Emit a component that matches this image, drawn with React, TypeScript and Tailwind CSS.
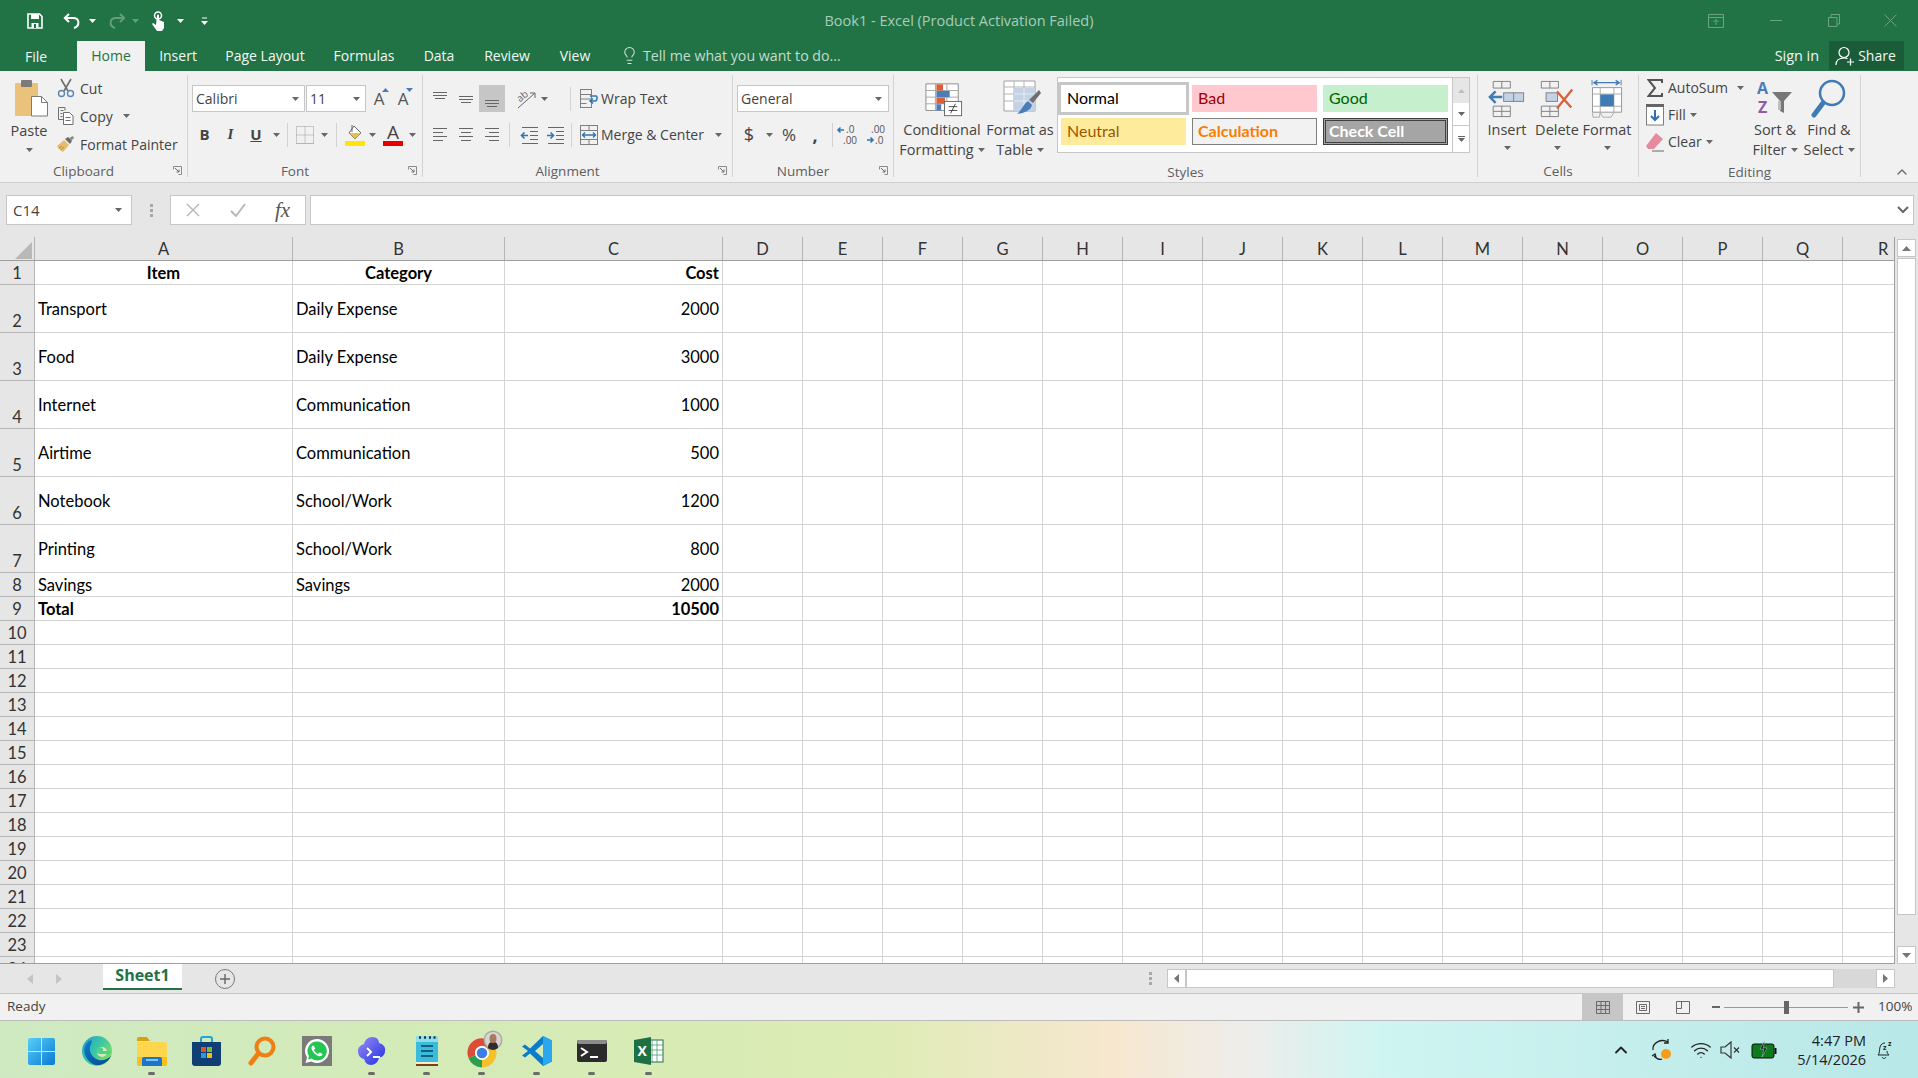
import React from 'react';
import { ChevronUp, Lightbulb, Wifi } from 'lucide-react';

const Caret = ({ color = '#666' }: { color?: string }) => (
  <svg width="7" height="4" viewBox="0 0 7 4" className="shrink-0"><path d="M0 0h7L3.5 4z" fill={color} /></svg>
);

const Launcher = () => (
  <svg width="9" height="9" viewBox="0 0 9 9" className="absolute right-[5px] top-[7px]">
    <path d="M.5 3.5V.5h8v8h-3" fill="none" stroke="#8a8a8a" />
    <path d="M2 2l4 4M6 3.5V6H3.5" fill="none" stroke="#6f6f6f" />
  </svg>
);

const Sep = () => <div className="w-px shrink-0 my-[4px] mb-[5px] bg-[#d2d2d2]" />;
const RowSep = () => <div className="w-px h-[24px] shrink-0 bg-[#d2d2d2]" />;

const Group = ({ width, label, launcher, children }: { width: string; label: string; launcher?: boolean; children: React.ReactNode }) => (
  <div className={`${width} shrink-0 flex flex-col`}>
    <div className="h-[89px] flex">{children}</div>
    <div className={`relative h-[23px] text-center text-[13.5px] leading-[25px] text-[#5e5e5e] ${launcher ? 'pr-[20px]' : ''}`}>
      {label}
      {launcher && <Launcher />}
    </div>
  </div>
);

const Box = ({ width, text, caretPad }: { width: string; text: string; caretPad: string }) => (
  <div className={`${width} h-[27px] shrink-0 bg-white border border-[#c6c6c6] flex items-center justify-between pl-[3px] ${caretPad} text-[14px] text-[#444]`}>
    <span>{text}</span>
    <Caret />
  </div>
);

const Lines = ({ rows }: { rows: [number, number, number][] }) => (
  <svg width="20" height="20" viewBox="0 0 20 20">
    {rows.map((r, i) => <path key={i} d={`M${r[0]} ${r[2]}.5H${r[1]}`} stroke="#666" />)}
  </svg>
);

const IndentIcon = ({ flip }: { flip?: boolean }) => (
  <svg width="20" height="20" viewBox="0 0 20 20">
    <path d="M2 2.5h16M10 6.5h8M10 10.5h8M10 14.5h8M2 18.5h16" stroke="#666" />
    {flip
      ? <path d="M1 10.5h6M4.5 7.5l3 3-3 3" fill="none" stroke="#2f75b5" strokeWidth="1.6" />
      : <path d="M8 10.5H2M4.5 7.5l-3 3 3 3" fill="none" stroke="#2f75b5" strokeWidth="1.6" />}
  </svg>
);

const PasteIcon = () => (
  <svg width="36" height="38" viewBox="0 0 36 38">
    <rect x="1" y="4" width="23" height="33" rx="1" fill="#ebc27c" />
    <rect x="7" y="1" width="11" height="7" rx="1" fill="#7b7b7b" />
    <path d="M17.5 17.5h10l6 6V37h-16z" fill="#fff" stroke="#7a7a7a" />
    <path d="M27.5 17.5v6h6" fill="none" stroke="#7a7a7a" />
  </svg>
);

const CutIcon = () => (
  <svg width="18" height="20" viewBox="0 0 18 20">
    <path d="M4 1l7 12M14 1L7 13" stroke="#6f6f6f" strokeWidth="1.6" />
    <circle cx="4.5" cy="15.5" r="3" fill="none" stroke="#5a86b5" strokeWidth="1.4" />
    <circle cx="13.5" cy="15.5" r="3" fill="none" stroke="#5a86b5" strokeWidth="1.4" />
  </svg>
);

const CopyIcon = () => (
  <svg width="18" height="20" viewBox="0 0 18 20" fill="none" stroke="#6f6f6f">
    <path d="M8 4.5V1.500H1.500v12H6" />
    <path d="M6.500 6.500h6l3.500 3.500v8.500H6.500z" fill="#fff" />
    <path d="M3.500 4.500h3M3.500 7.500h2M3.500 10.500h2M8.500 11.500h5M8.500 14.500h5" />
  </svg>
);

const PainterIcon = () => (
  <svg width="20" height="18" viewBox="0 0 20 18">
    <path d="M1 11l7-6 5 5-6 7c-2-1-5-3-6-6z" fill="#e8bb6b" />
    <path d="M3 13l3-2M5 15l3-3" stroke="#b08a48" />
    <path d="M9 4l3-2 4 4-2 3z" fill="#6b6b6b" />
    <path d="M13 3l4-2 1 2-3 3z" fill="#8c8c8c" />
  </svg>
);

const GrowFont = ({ up }: { up?: boolean }) => (
  <span className="relative w-[24px] flex justify-center text-[17px] leading-none text-[#555]">
    A
    <svg width="7" height="4" viewBox="0 0 7 4" className="absolute right-[2px] top-[-2px]">
      <path d={up ? 'M0 4h7L3.5 0z' : 'M0 0h7L3.5 4z'} fill="#4a7eb0" />
    </svg>
  </span>
);

const BorderIcon = () => (
  <svg width="20" height="20" viewBox="0 0 20 20" fill="none">
    <path d="M1.500 1.500h17v17h-17zM10 1.500v17M1.500 10h17" stroke="#9a9a9a" strokeDasharray="1 1" />
    <path d="M1 18.500h18" stroke="#b5b5b5" />
  </svg>
);

const FillIcon = () => (
  <svg width="22" height="22" viewBox="0 0 22 22">
    <path d="M10 2l7 7-6 6-6-6z" fill="#fff" stroke="#666" />
    <path d="M8 1v7" stroke="#666" />
    <path d="M5 9h12l-6 6z" fill="#dfc24f" />
    <rect x="1" y="17" width="20" height="5" fill="#ffe600" />
  </svg>
);

const FontColorIcon = () => (
  <span className="flex flex-col items-center leading-none">
    <span className="text-[19px] leading-[18px] text-[#444]">A</span>
    <span className="w-[20px] h-[5px] bg-[#e60000]" />
  </span>
);

const OrientIcon = () => (
  <svg width="24" height="22" viewBox="0 0 24 22" fill="none" className="overflow-visible">
    <text x="2" y="12" fontSize="10" fill="#666" transform="rotate(-40 7 9)">ab</text>
    <path d="M3 20L20 5M15 5h5v5" stroke="#666" />
  </svg>
);

const WrapIcon = () => (
  <svg width="20" height="22" viewBox="0 0 20 22" fill="none">
    <rect x="1.500" y="1.500" width="11" height="18" stroke="#7f7f7f" />
    <path d="M1.500 6.500h11M1.500 11h11M1.500 15.500h6" stroke="#7f7f7f" />
    <path d="M11 8h6c1.500 0 1.500 5-1 5h-4M14 10.500L11 13l3 2.500" stroke="#2f75b5" strokeWidth="1.500" />
  </svg>
);

const MergeIcon = () => (
  <svg width="20" height="22" viewBox="0 0 20 22" fill="none">
    <rect x="1.500" y="1.500" width="17" height="19" stroke="#7f7f7f" />
    <path d="M1.500 6.500h17M1.500 15.500h17M10 1.500v5M10 15.500v5" stroke="#7f7f7f" />
    <path d="M3 11h14M6 8.500L3.500 11 6 13.500M14 8.500l2.500 2.500-2.500 2.500" stroke="#2f75b5" strokeWidth="1.300" />
  </svg>
);

const DecimalIcon = ({ more }: { more?: boolean }) => (
  <svg width="24" height="24" viewBox="0 0 24 24" className="overflow-visible">
    {more ? (
      <>
        <text x="10" y="10" fontSize="10" fill="#555">.0</text>
        <text x="7" y="21" fontSize="10" fill="#555">.00</text>
        <path d="M8 7H2M4.500 4.500L2 7l2.500 2.500" fill="none" stroke="#2f75b5" strokeWidth="1.600" />
      </>
    ) : (
      <>
        <text x="7" y="10" fontSize="10" fill="#555">.00</text>
        <text x="11" y="21" fontSize="10" fill="#555">.0</text>
        <path d="M3 17h6M6.500 14.500L9 17l-2.500 2.500" fill="none" stroke="#2f75b5" strokeWidth="1.600" />
      </>
    )}
  </svg>
);

const CondIcon = () => (
  <svg width="38" height="36" viewBox="0 0 40 36">
    <path d="M1 1h34v28H1z" fill="#fff" stroke="#8a8a8a" />
    <path d="M1 8h34M1 15h34M1 22h34M11 1v28M23 1v28" stroke="#a6a6a6" />
    <rect x="12" y="1.500" width="7" height="6.500" fill="#d9603b" />
    <rect x="12" y="8.500" width="14" height="6.500" fill="#4a7eb8" />
    <rect x="12" y="15.500" width="9" height="6.500" fill="#d9603b" />
    <rect x="12" y="22.500" width="5" height="6.500" fill="#4a7eb8" />
    <rect x="20.500" y="19.500" width="18" height="15" fill="#fff" stroke="#666" />
    <path d="M25 25h9M25 29h9M32 22l-5 10" stroke="#444" />
  </svg>
);

const TableIcon = () => (
  <svg width="38" height="38" viewBox="0 0 38 38">
    <path d="M1 1h31v30H1z" fill="#fff" stroke="#a0a0a0" />
    <path d="M1 7h31M1 14h31M1 21h31M11 1v30M21 1v30" stroke="#b5b5b5" />
    <rect x="11" y="8" width="21" height="23" fill="#c3d2e5" />
    <path d="M11 14h21M11 21h21M21 8v23" stroke="#e4ecf5" />
    <path d="M36 10l2 3-8 10-4-3z" fill="#6f6f6f" />
    <path d="M25 21l4 4c-1 5-7 8-15 9 4-3 6-9 11-13z" fill="#4a7eb8" />
  </svg>
);

const InsertIcon = () => (
  <svg width="38" height="38" viewBox="0 0 40 40" fill="none">
    <path d="M5.500 1.500h18v7h-18zM14.500 1.500v7M5.500 27.500h18v11h-18zM14.500 27.500v11M5.500 33h18" stroke="#7f7f7f" />
    <rect x="16.500" y="13.500" width="21" height="9" fill="#c3d2e5" stroke="#7f7f7f" />
    <path d="M27 13.500v9" stroke="#7f7f7f" />
    <path d="M15 18H2M8 12l-6 6 6 6" stroke="#3f7cb5" strokeWidth="2.600" />
  </svg>
);

const DeleteIcon = () => (
  <svg width="38" height="38" viewBox="0 0 40 40" fill="none">
    <path d="M3.500 1.500h18v7h-18zM12.500 1.500v7M3.500 27.500h18v11h-18zM12.500 27.500v11M3.500 33h18" stroke="#7f7f7f" />
    <rect x="8.500" y="13.500" width="12" height="9" fill="#c3d2e5" stroke="#7f7f7f" />
    <path d="M20 12l15 17M36 10L20 30" stroke="#d9603b" strokeWidth="2.400" />
  </svg>
);

const FormatCellIcon = () => (
  <svg width="33" height="40" viewBox="0 0 36 44" fill="none">
    <path d="M1 1v6M33 1v6" stroke="#3f7cb5" />
    <path d="M3 4h28M7 1.500L3 4l4 2.500M27 1.500L31 4l-4 2.500" stroke="#3f7cb5" strokeWidth="1.400" />
    <path d="M1.500 9.500h32v27h-32z" fill="#fff" stroke="#8f8f8f" />
    <path d="M1.500 16.500h32M1.500 30h32M10 9.500v27M25 9.500v27" stroke="#a6a6a6" />
    <rect x="10" y="17" width="15" height="13" fill="#3f7cb5" />
    <path d="M10 37l-1 5H2l-.5-5M25 37l-3 5h-9l-3-5" stroke="#a6a6a6" />
  </svg>
);

const SigmaIcon = () => (
  <svg width="16" height="18" viewBox="0 0 16 18" fill="none">
    <path d="M15 4V1H1.500l6.500 8-6.500 8H15v-3" stroke="#555" strokeWidth="2" />
  </svg>
);

const FillDownIcon = () => (
  <svg width="18" height="22" viewBox="0 0 18 22">
    <rect x=".5" y="1" width="17" height="20" fill="#fff" stroke="#7f7f7f" />
    <rect x="0" y="0" width="18" height="3" fill="#666" />
    <path d="M9 6v10M5 12l4 4 4-4" fill="none" stroke="#2f6fb0" strokeWidth="2" />
  </svg>
);

const EraserIcon = () => (
  <svg width="20" height="20" viewBox="0 0 20 20">
    <path d="M11 1l7 6-9 10-6 0-2-3z" fill="#e88a9f" />
    <path d="M7 19h12" stroke="#666" />
  </svg>
);

const SortIcon = () => (
  <svg width="38" height="38" viewBox="0 0 38 38" className="overflow-visible">
    <text x="1" y="14" fontSize="16" fontWeight="bold" fill="#4a7eb8">A</text>
    <text x="2" y="33" fontSize="16" fontWeight="bold" fill="#8e5aa8">Z</text>
    <path d="M16 12h20l-8 9v12l-4-2V21z" fill="#777" />
    <path d="M22 21h3v9h-3z" fill="#bcbcbc" />
  </svg>
);

const FindIcon = () => (
  <svg width="36" height="40" viewBox="0 0 36 40" fill="none">
    <circle cx="21" cy="14" r="12" stroke="#3f7cb5" strokeWidth="2.500" />
    <path d="M12 24L3 36" stroke="#3f7cb5" strokeWidth="5" strokeLinecap="round" />
  </svg>
);

const BigLabel = ({ lines, caret }: { lines: string[]; caret?: boolean }) => (
  <div className="flex flex-col items-center whitespace-nowrap text-[14.5px] leading-[20px] text-[#444]">
    {lines.map((l, i) => (
      <span key={i} className="flex items-center gap-[4px]">
        {l}
        {caret && i === lines.length - 1 && <Caret />}
      </span>
    ))}
  </div>
);

const RibbonTabs = ['Insert', 'Page Layout', 'Formulas', 'Data', 'Review', 'View'];

const TitleBar = () => (
  <div className="bg-[#217346] shrink-0">
    <div className="h-[41px] flex items-center relative">
      <div className="flex items-center">
        <svg width="16" height="16" viewBox="0 0 16 16" className="ml-[27px]">
          <path d="M1 1h11.500L15 3.500V15H1z" fill="none" stroke="#fff" strokeWidth="1.600" />
          <rect x="4" y="1" width="8" height="5" fill="#fff" />
          <rect x="4.500" y="10" width="7" height="5" fill="#fff" />
          <rect x="7" y="11" width="2" height="4" fill="#217346" />
        </svg>
        <svg width="18" height="16" viewBox="0 0 18 16" className="ml-[20px]" fill="none">
          <path d="M6 1L1.800 5 6 9" stroke="#fff" strokeWidth="2" />
          <path d="M2 5h8c7 0 7 8 1 10" stroke="#fff" strokeWidth="2" />
        </svg>
        <span className="ml-[8px]"><Caret color="#fff" /></span>
        <svg width="18" height="16" viewBox="0 0 18 16" className="ml-[12px]" fill="none" opacity="0.3">
          <path d="M12 1l4.200 4L12 9" stroke="#fff" strokeWidth="2" />
          <path d="M16 5H8C1 5 1 13 7 15" stroke="#fff" strokeWidth="2" />
        </svg>
        <span className="ml-[6px] opacity-30"><Caret color="#fff" /></span>
        <svg width="15" height="20" viewBox="0 0 15 20" className="ml-[12px]">
          <circle cx="7" cy="4.500" r="3.500" fill="none" stroke="#fff" strokeWidth="1.500" />
          <path d="M6 4.500c0-1.500 2-1.500 2 0V9l5 2v6l-2 3H6l-5-7 1-1 3 2z" fill="#fff" />
        </svg>
        <span className="ml-[11px]"><Caret color="#fff" /></span>
        <svg width="7" height="8" viewBox="0 0 7 8" className="ml-[17px]">
          <path d="M1 1h5" stroke="#fff" />
          <path d="M0 4h7L3.500 8z" fill="#fff" />
        </svg>
      </div>
      <div className="absolute left-0 right-0 top-[12px] text-center text-[14.5px] leading-[18px] text-[#a9cdb9] pointer-events-none">
        Book1 - Excel (Product Activation Failed)
      </div>
      <div className="ml-auto flex items-center">
        <svg width="16" height="14" viewBox="0 0 16 14" fill="none" className="mr-[46px]" stroke="#6da385">
          <path d="M.5.5h15v13H.5zM.5 3.500h15M8 11V6M5.500 8L8 5.500 10.500 8" />
        </svg>
        <div className="w-[12px] h-px bg-[#6da385] mr-[46px]" />
        <svg width="12" height="13" viewBox="0 0 12 13" fill="none" className="mr-[44px]" stroke="#6da385">
          <path d="M.5 3.500h8.500v9H.5zM3 3V.5h8.500V10H9" />
        </svg>
        <svg width="13" height="13" viewBox="0 0 13 13" className="mr-[21px]" stroke="#6da385">
          <path d="M.5.500l12 12M12.500.500l-12 12" />
        </svg>
      </div>
    </div>
    <div className="h-[30px] flex text-[14px] text-[#f2f7f4]">
      <div className="w-[73px] pl-[25px] pt-[5px]">File</div>
      <div className="w-[68px] ml-[4px] bg-[#f1f1f1] text-center pt-[4px] text-[#217346]">Home</div>
      <div className="w-[66px] text-center pt-[4px]">{RibbonTabs[0]}</div>
      <div className="w-[108px] text-center pt-[4px]">{RibbonTabs[1]}</div>
      <div className="w-[90px] text-center pt-[4px]">{RibbonTabs[2]}</div>
      <div className="w-[60px] text-center pt-[4px]">{RibbonTabs[3]}</div>
      <div className="w-[76px] text-center pt-[4px]">{RibbonTabs[4]}</div>
      <div className="w-[60px] text-center pt-[4px]">{RibbonTabs[5]}</div>
      <Lightbulb size={19} strokeWidth={1.3} className="ml-[15px] mt-[5px] text-[#cfe3d7]" />
      <div className="ml-[4px] pt-[4px] text-[14.2px] text-[#c4dccf]">Tell me what you want to do...</div>
      <div className="ml-auto pt-[4px] mr-[10px] text-[14.4px]">Sign in</div>
      <div className="w-[75px] mr-[14px] h-[29px] bg-[#1a5c38] flex items-center justify-center gap-[3px] pr-[2px]">
        <svg width="20" height="20" viewBox="0 0 20 20" fill="none" stroke="#fff" strokeWidth="1.200">
          <circle cx="9" cy="6.500" r="5" />
          <path d="M1 19c0-5 3-7 8-7 1.500 0 2.500.2 3.500.7M15.500 12.500v7M12 16h7" />
        </svg>
        <span>Share</span>
      </div>
    </div>
  </div>
);

const ClipRow = ({ icon, label, caret }: { icon: React.ReactNode; label: string; caret?: boolean }) => (
  <div className="h-[28px] flex items-center">
    <span className="w-[24px] flex justify-center shrink-0">{icon}</span>
    <span className="ml-[2px] text-[14px] text-[#444] whitespace-nowrap">{label}</span>
    {caret && <span className="ml-[10px]"><Caret /></span>}
  </div>
);

const EditRow = ({ icon, label, gap, caret }: { icon: React.ReactNode; label: string; gap: string; caret: boolean }) => (
  <div className="h-[27px] flex items-center">
    <span className="w-[22px] flex justify-center shrink-0">{icon}</span>
    <span className="ml-[2px] text-[14px] text-[#444] whitespace-nowrap">{label}</span>
    {caret && <span className={gap}><Caret /></span>}
  </div>
);

const Ribbon = () => (
  <div className="h-[112px] shrink-0 bg-[#f1f1f1] border-b border-[#d0d0d0] flex">
    <Group width="w-[187px]" label="Clipboard" launcher>
      <div className="ml-[8px] w-[42px] flex flex-col items-center pt-[8px]">
        <span className="ml-[6px]"><PasteIcon /></span>
        <span className="mt-[4px] text-[14.5px] leading-[20px] text-[#444]">Paste</span>
        <span className="mt-[7px]"><Caret /></span>
      </div>
      <div className="ml-[4px] pt-[3px]">
        <ClipRow icon={<CutIcon />} label="Cut" />
        <ClipRow icon={<CopyIcon />} label="Copy" caret />
        <ClipRow icon={<PainterIcon />} label="Format Painter" />
      </div>
    </Group>
    <Sep />
    <Group width="w-[234px]" label="Font" launcher>
      <div className="ml-[4px] pt-[14px] flex flex-col">
        <div className="flex items-center">
          <Box width="w-[113px]" text="Calibri" caretPad="pr-[5px]" />
          <Box width="w-[60px] ml-[1px]" text="11" caretPad="pr-[5px]" />
          <span className="ml-[1px] flex"><GrowFont up /><GrowFont /></span>
        </div>
        <div className="mt-[9px] h-[27px] flex items-center text-[#444]">
          <span className="w-[25px] text-center text-[15px] font-bold">B</span>
          <span className="w-[27px] text-center text-[15px] italic font-bold font-['Liberation_Serif',serif]">I</span>
          <span className="w-[24px] text-center text-[15px] font-bold underline">U</span>
          <span className="w-[16px] flex justify-center"><Caret /></span>
          <span className="ml-[3px]"><RowSep /></span>
          <span className="ml-[5px] w-[24px] flex justify-center"><BorderIcon /></span>
          <span className="w-[12px] ml-[1px] flex justify-center"><Caret /></span>
          <span className="ml-[6px]"><RowSep /></span>
          <span className="ml-[5px] w-[25px] flex justify-center"><FillIcon /></span>
          <span className="w-[10px] flex justify-center"><Caret /></span>
          <span className="ml-[1px] w-[30px] flex justify-center"><FontColorIcon /></span>
          <span className="w-[9px] flex justify-center"><Caret /></span>
        </div>
      </div>
    </Group>
    <Sep />
    <Group width="w-[309px]" label="Alignment" launcher>
      <div className="ml-[4px] pt-[14px] flex flex-col">
        <div className="h-[27px] flex items-center">
          <span className="w-[26px] flex justify-center"><Lines rows={[[3, 17, 3], [3, 17, 6], [5, 15, 9]]} /></span>
          <span className="w-[26px] flex justify-center"><Lines rows={[[3, 17, 7], [3, 17, 10], [5, 15, 13]]} /></span>
          <span className="w-[26px] h-[27px] bg-[#c6c6c6] flex items-center justify-center"><Lines rows={[[3, 17, 11], [3, 17, 14], [5, 15, 17]]} /></span>
          <span className="ml-[9px] w-[26px] flex justify-center"><OrientIcon /></span>
          <span className="w-[8px] flex justify-center"><Caret /></span>
          <span className="ml-[22px]"><RowSep /></span>
          <span className="ml-[8px] w-[20px] flex justify-center"><WrapIcon /></span>
          <span className="ml-[2px] text-[14px] text-[#444] whitespace-nowrap">Wrap Text</span>
        </div>
        <div className="mt-[9px] h-[27px] flex items-center">
          <span className="w-[26px] flex justify-center"><Lines rows={[[3, 17, 3], [3, 13, 7], [3, 17, 11], [3, 13, 15]]} /></span>
          <span className="w-[26px] flex justify-center"><Lines rows={[[3, 17, 3], [5, 15, 7], [3, 17, 11], [5, 15, 15]]} /></span>
          <span className="w-[26px] flex justify-center"><Lines rows={[[3, 17, 3], [7, 17, 7], [3, 17, 11], [7, 17, 15]]} /></span>
          <span className="ml-[4px]"><RowSep /></span>
          <span className="ml-[7px] w-[26px] flex justify-center"><IndentIcon /></span>
          <span className="w-[25px] flex justify-center"><IndentIcon flip /></span>
          <span className="ml-[3px]"><RowSep /></span>
          <span className="ml-[7px] w-[20px] flex justify-center"><MergeIcon /></span>
          <span className="ml-[2px] text-[14px] text-[#444] whitespace-nowrap">Merge &amp; Center</span>
          <span className="ml-[11px]"><Caret /></span>
        </div>
      </div>
    </Group>
    <Sep />
    <Group width="w-[160px]" label="Number" launcher>
      <div className="ml-[4px] pt-[14px] flex flex-col">
        <Box width="w-[152px]" text="General" caretPad="pr-[6px]" />
        <div className="mt-[9px] h-[27px] flex items-center text-[#444]">
          <span className="w-[24px] text-center text-[18px]">$</span>
          <span className="ml-[4px] w-[8px] flex justify-center"><Caret /></span>
          <span className="ml-[2px] w-[28px] text-center text-[17px]">%</span>
          <span className="w-[24px] text-center text-[18px] font-bold leading-[18px]">,</span>
          <span className="ml-[5px]"><RowSep /></span>
          <span className="ml-[3px] w-[24px] flex justify-center"><DecimalIcon more /></span>
          <span className="ml-[4px] w-[24px] flex justify-center"><DecimalIcon /></span>
        </div>
      </div>
    </Group>
    <Sep />
    <Group width="w-[583px]" label="Styles">
      <div className="ml-[2px] w-[92px] flex flex-col items-center pt-[11px]">
        <span className="ml-[4px]"><CondIcon /></span>
        <span className="mt-[2px]"><BigLabel lines={['Conditional', 'Formatting']} caret /></span>
      </div>
      <div className="w-[64px] flex flex-col items-center pt-[9px]">
        <span className="ml-[4px]"><TableIcon /></span>
        <span className="mt-[2px]"><BigLabel lines={['Format as', 'Table']} caret /></span>
      </div>
      <div className="ml-[5px] mt-[6px] h-[76px] w-[413px] bg-white border border-[#c6c6c6] flex">
        <div className="w-[395px] pl-[3px] pt-[7px] grid grid-cols-[125px_125px_125px] auto-rows-[27px] gap-x-[6px] gap-y-[6px] font-['Lato',sans-serif] text-[16px] leading-[25px]">
          <div className="pl-[6px] text-black outline-[3px] outline-[#c6c6c6]">Normal</div>
          <div className="pl-[6px] bg-[#ffc7ce] text-[#9c0006]">Bad</div>
          <div className="pl-[6px] bg-[#c6efce] text-[#006100]">Good</div>
          <div className="pl-[6px] bg-[#ffeb9c] text-[#9c5700]">Neutral</div>
          <div className="pl-[5px] bg-[#f2f2f2] border border-[#7f7f7f] text-[#fa7d00] font-bold leading-[23px]">Calculation</div>
          <div className="pl-[3px] bg-[#a5a5a5] border-[3px] border-double border-[#3f3f3f] text-white font-bold leading-[19px]">Check Cell</div>
        </div>
        <div className="w-[17px] flex flex-col border-l border-[#c6c6c6]">
          <div className="h-[25px] bg-[#e6e6e6] flex items-center justify-center"><svg width="7" height="4" viewBox="0 0 7 4"><path d="M0 4h7L3.5 0z" fill="#bdbdbd" /></svg></div>
          <div className="h-[23px] border-b border-[#c6c6c6] flex items-center justify-center"><Caret /></div>
          <div className="flex-1 flex flex-col items-center justify-center gap-[1px]"><div className="w-[7px] h-px bg-[#666]" /><Caret /></div>
        </div>
      </div>
    </Group>
    <Sep />
    <Group width="w-[160px]" label="Cells">
      <div className="ml-[4px] w-[50px] flex flex-col items-center pt-[9px]">
        <InsertIcon />
        <span className="mt-[2px]"><BigLabel lines={['Insert']} /></span>
        <span className="mt-[6px]"><Caret /></span>
      </div>
      <div className="w-[50px] flex flex-col items-center pt-[9px]">
        <DeleteIcon />
        <span className="mt-[2px]"><BigLabel lines={['Delete']} /></span>
        <span className="mt-[6px]"><Caret /></span>
      </div>
      <div className="w-[50px] flex flex-col items-center pt-[8px]">
        <FormatCellIcon />
        <span className="mt-[1px]"><BigLabel lines={['Format']} /></span>
        <span className="mt-[6px]"><Caret /></span>
      </div>
    </Group>
    <Sep />
    <Group width="w-[221px]" label="Editing">
      <div className="ml-[5px] w-[103px] pt-[3px]">
        <EditRow icon={<SigmaIcon />} label="AutoSum" gap="ml-[9px]" caret />
        <EditRow icon={<FillDownIcon />} label="Fill" gap="ml-[4px]" caret />
        <EditRow icon={<EraserIcon />} label="Clear" gap="ml-[4px]" caret />
      </div>
      <div className="w-[56px] flex flex-col items-center pt-[9px]">
        <SortIcon />
        <span className="mt-[2px]"><BigLabel lines={['Sort &', 'Filter']} caret /></span>
      </div>
      <div className="w-[52px] flex flex-col items-center pt-[8px]">
        <FindIcon />
        <span className="mt-[1px]"><BigLabel lines={['Find &', 'Select']} caret /></span>
      </div>
    </Group>
    <Sep />
    <div className="flex-1 flex justify-end items-end pb-[2px] pr-[8px]">
      <ChevronUp size={16} strokeWidth={2} className="text-[#6a6a6a]" />
    </div>
  </div>
);

const FormulaBar = () => (
  <div className="h-[54px] shrink-0 bg-[#e6e6e6] flex pt-[12px] pb-[12px] pl-[6px]">
    <div className="w-[126px] h-[30px] bg-white border border-[#c6c6c6] flex items-center justify-between pl-[6px] pr-[9px] text-[15px] text-[#444]">
      <span>C14</span>
      <Caret />
    </div>
    <div className="w-[38px] flex flex-col items-center justify-center gap-[2px]">
      <div className="w-[3px] h-[3px] bg-[#a8a8a8]" />
      <div className="w-[3px] h-[3px] bg-[#a8a8a8]" />
      <div className="w-[3px] h-[3px] bg-[#a8a8a8]" />
    </div>
    <div className="w-[136px] h-[30px] bg-white border border-[#c6c6c6] flex items-center">
      <svg width="14" height="14" viewBox="0 0 14 14" className="ml-[15px]" stroke="#b5b5b5" strokeWidth="1.4"><path d="M1 1l12 12M13 1L1 13" /></svg>
      <svg width="16" height="14" viewBox="0 0 16 14" className="ml-[30px]" fill="none" stroke="#b5b5b5" strokeWidth="1.8"><path d="M1 8l5 5L15 1" /></svg>
      <span className="ml-[29px] font-['Liberation_Serif',serif] italic text-[21px] leading-none text-[#555]">fx</span>
    </div>
    <div className="ml-[4px] w-[1604px] h-[30px] bg-white border border-[#c6c6c6] flex items-center justify-end pr-[4px]">
      <svg width="12" height="8" viewBox="0 0 12 8" fill="none" stroke="#6a6a6a" strokeWidth="2.2"><path d="M1 1l5 5 5-5" /></svg>
    </div>
  </div>
);

const columns = [
  { name: 'A', width: 'w-[258px]' },
  { name: 'B', width: 'w-[212px]' },
  { name: 'C', width: 'w-[218px]' },
  ...['D', 'E', 'F', 'G', 'H', 'I', 'J', 'K', 'L', 'M', 'N', 'O', 'P', 'Q'].map((name) => ({ name, width: 'w-[80px]' })),
];

type Row = { n: number; tall?: boolean; bold?: boolean; a?: string; b?: string; c?: string; center?: boolean };

const dataRows: Row[] = [
  { n: 1, bold: true, center: true, a: 'Item', b: 'Category', c: 'Cost' },
  { n: 2, tall: true, a: 'Transport', b: 'Daily Expense', c: '2000' },
  { n: 3, tall: true, a: 'Food', b: 'Daily Expense', c: '3000' },
  { n: 4, tall: true, a: 'Internet', b: 'Communication', c: '1000' },
  { n: 5, tall: true, a: 'Airtime', b: 'Communication', c: '500' },
  { n: 6, tall: true, a: 'Notebook', b: 'School/Work', c: '1200' },
  { n: 7, tall: true, a: 'Printing', b: 'School/Work', c: '800' },
  { n: 8, a: 'Savings', b: 'Savings', c: '2000' },
  { n: 9, bold: true, a: 'Total', c: '10500' },
];

const allRows: Row[] = [
  ...dataRows,
  ...Array.from({ length: 15 }, (_, i) => ({ n: i + 10 })),
];

const Sheet = () => (
  <div className="flex-1 min-h-0 flex bg-[#e6e6e6]">
    <div className="w-[1895px] border-r border-[#9f9f9f] flex flex-col overflow-hidden font-['Lato',sans-serif] text-[16.5px] text-black border-b">
      <div className="h-[24px] shrink-0 flex border-b border-[#9f9f9f] text-[#333]">
        <div className="w-[35px] shrink-0 border-r border-[#b5b5b5] relative">
          <svg width="17" height="17" viewBox="0 0 17 17" className="absolute right-[2px] bottom-[1px]"><path d="M17 0v17H0z" fill="#b8b8b8" /></svg>
        </div>
        {columns.map((c) => (
          <div key={c.name} className={`${c.width} shrink-0 text-center leading-[25px] border-r border-[#b5b5b5]`}>{c.name}</div>
        ))}
        <div className="w-[51px] shrink-0 pl-[35px] leading-[25px]">R</div>
      </div>
      {allRows.map((row) => (
        <div key={row.n} className={`${row.tall ? 'h-[48px]' : 'h-[24px]'} shrink-0 flex`}>
          <div className="w-[35px] shrink-0 bg-[#e6e6e6] border-r border-b border-[#b5b5b5] flex items-end justify-center leading-[21px] text-[#333]">{row.n}</div>
          <div className={`${columns[0].width} shrink-0 bg-white border-r border-b border-[#d4d4d4] pt-[2px] flex items-center ${row.center ? 'justify-center' : 'pl-[3px]'} ${row.bold ? 'font-bold' : ''}`}>{row.a}</div>
          <div className={`${columns[1].width} shrink-0 bg-white border-r border-b border-[#d4d4d4] pt-[2px] flex items-center ${row.center ? 'justify-center' : 'pl-[3px]'} ${row.bold ? 'font-bold' : ''}`}>{row.b}</div>
          <div className={`${columns[2].width} shrink-0 bg-white border-r border-b border-[#d4d4d4] pt-[2px] pr-[3px] flex items-center justify-end ${row.bold ? 'font-bold' : ''}`}>{row.c}</div>
          {columns.slice(3).map((c) => (
            <div key={c.name} className={`${c.width} shrink-0 bg-white border-b border-r border-[#d4d4d4]`} />
          ))}
          <div className="w-[51px] shrink-0 bg-white border-b border-[#d4d4d4]" />
        </div>
      ))}
    </div>
    <div className="flex-1 flex flex-col items-center pt-[2px]">
      <div className="w-[19px] h-[18px] bg-white border border-[#c6c6c6] flex items-center justify-center">
        <svg width="9" height="5" viewBox="0 0 9 5"><path d="M0 5h9L4.5 0z" fill="#777" /></svg>
      </div>
      <div className="w-[19px] h-[657px] mt-px bg-white border border-[#c6c6c6]" />
      <div className="mt-auto w-[19px] h-[18px] bg-white border border-[#c6c6c6] flex items-center justify-center">
        <svg width="9" height="5" viewBox="0 0 9 5"><path d="M0 0h9L4.5 5z" fill="#777" /></svg>
      </div>
    </div>
  </div>
);

const TabBar = () => (
  <div className="h-[29px] shrink-0 bg-[#e6e6e6] flex items-start">
    <svg width="6" height="10" viewBox="0 0 6 10" className="ml-[27px] mt-[10px]"><path d="M6 0v10L0 5z" fill="#c4c4c4" /></svg>
    <svg width="6" height="10" viewBox="0 0 6 10" className="ml-[23px] mt-[10px]"><path d="M0 0v10l6-5z" fill="#c4c4c4" /></svg>
    <div className="ml-[41px] w-[79px] h-[26px] bg-white border-b-[2px] border-[#217346] text-center text-[16px] leading-[23px] font-bold text-[#217346]">Sheet1</div>
    <div className="ml-[33px] mt-[5px] w-[20px] h-[20px] rounded-full border border-[#7a7a7a] flex items-center justify-center">
      <svg width="10" height="10" viewBox="0 0 10 10" stroke="#666" strokeWidth="1.4"><path d="M5 0v10M0 5h10" /></svg>
    </div>
    <div className="ml-[914px] mt-[8px] flex flex-col gap-[2px]">
      <div className="w-[3px] h-[3px] bg-[#a8a8a8]" />
      <div className="w-[3px] h-[3px] bg-[#a8a8a8]" />
      <div className="w-[3px] h-[3px] bg-[#a8a8a8]" />
    </div>
    <div className="ml-[15px] mt-[5px] flex w-[728px] h-[19px] bg-[#d8d8d8]">
      <div className="w-[19px] bg-white border border-[#c6c6c6] flex items-center justify-center"><svg width="5" height="9" viewBox="0 0 5 9"><path d="M5 0v9L0 4.500z" fill="#777" /></svg></div>
      <div className="w-[648px] bg-white border border-[#c6c6c6]" />
      <div className="ml-auto w-[19px] bg-white border border-[#c6c6c6] flex items-center justify-center"><svg width="5" height="9" viewBox="0 0 5 9"><path d="M0 0v9l5-4.500z" fill="#777" /></svg></div>
    </div>
  </div>
);

const StatusBar = () => (
  <div className="h-[27px] shrink-0 bg-[#f1f1f1] border-t border-[#c6c6c6] flex items-center text-[13.5px] text-[#444]">
    <span className="ml-[7px] pb-[2px]">Ready</span>
    <div className="ml-auto h-full w-[41px] bg-[#c6c6c6] flex items-center justify-center">
      <svg width="14" height="13" viewBox="0 0 14 13" fill="none" stroke="#6a6a6a"><path d="M.5.5h13v12H.5zM.5 4.500h13M.5 8.500h13M5 .5v12M9.500.5v12" /></svg>
    </div>
    <svg width="14" height="13" viewBox="0 0 14 13" fill="none" stroke="#6a6a6a" className="ml-[13px]"><path d="M.5.5h13v12H.5zM3.500 3.500h7v6h-7zM5 5.500h4M5 7.500h4" /></svg>
    <svg width="14" height="13" viewBox="0 0 14 13" fill="none" stroke="#6a6a6a" className="ml-[26px]"><path d="M.5.5h13v12H.5zM.5 7.500h5v-7" /></svg>
    <div className="ml-[22px] w-[8px] h-[2px] bg-[#666]" />
    <div className="ml-[4px] w-[124px] h-px bg-[#9a9a9a] flex items-center justify-center">
      <div className="w-[5px] h-[13px] bg-[#666]" />
    </div>
    <svg width="11" height="11" viewBox="0 0 11 11" stroke="#666" strokeWidth="2" className="ml-[5px]"><path d="M5.500 0v11M0 5.500h11" /></svg>
    <span className="ml-[14px] mr-[8px] w-[32px] pb-[2px]">100%</span>
  </div>
);

const TaskIcon = ({ running, children }: { running?: boolean; children: React.ReactNode }) => (
  <div className="w-[55px] flex flex-col items-center">
    <div className="h-[34px] flex items-center justify-center">{children}</div>
    <div className={`mt-[4px] w-[7px] h-[3px] rounded-full ${running ? 'bg-[#6b6b6b]' : 'bg-transparent'}`} />
  </div>
);

const PromptMark = ({ stroke }: { stroke: string }) => (
  <path d="M9 12l4 4-4 4M15 21h7" fill="none" stroke={stroke} strokeWidth="2" />
);

const Taskbar = () => (
  <div className="h-[58px] shrink-0 border-t border-[#bcbcbc] bg-[linear-gradient(90deg,#cfe9c2_0%,#d3ebb8_20%,#dcecb4_45%,#f7e7cf_58%,#ededea_65%,#cff5f2_72%,#c4eeec_85%,#b8e8e8_100%)] flex items-center">
    <div className="ml-[14px] flex pt-[10px]">
      <TaskIcon>
        <svg width="29" height="29" viewBox="0 0 29 29">
          <defs><linearGradient id="win" x1="0" y1="0" x2="1" y2="1"><stop offset="0" stopColor="#58d0f8" /><stop offset="1" stopColor="#0a78d4" /></linearGradient></defs>
          <path d="M1 3a2 2 0 012-2h11v13H1zM15 1h11a2 2 0 012 2v11H15zM1 15h13v13H3a2 2 0 01-2-2zM15 15h13v11a2 2 0 01-2 2H15z" fill="url(#win)" />
        </svg>
      </TaskIcon>
      <TaskIcon>
        <svg width="30" height="30" viewBox="0 0 30 30">
          <defs>
            <linearGradient id="edgeA" x1="0" y1="0" x2="1" y2="0.6"><stop offset="0" stopColor="#1fa0cf" /><stop offset="0.6" stopColor="#3fc9a0" /><stop offset="1" stopColor="#7fdc5e" /></linearGradient>
            <linearGradient id="edgeB" x1="0" y1="0" x2="0.6" y2="1"><stop offset="0" stopColor="#0c7fd0" /><stop offset="1" stopColor="#0a4f9c" /></linearGradient>
          </defs>
          <circle cx="15" cy="15" r="15" fill="url(#edgeA)" />
          <path d="M29 20c-3 7-13 13-21 6C1 20 0 10 7 5c4-2 3 1 2 3-3 6 0 14 8 16 4 1 9-1 12-4z" fill="url(#edgeB)" />
          <circle cx="20" cy="16" r="5" fill="#d3ebb8" />
          <path d="M15 13c2-3 7-2 6 2h8c0 3-1 3-2 3h-9c-2 0-4-2-3-5z" fill="#4fd18a" />
        </svg>
      </TaskIcon>
      <TaskIcon running>
        <svg width="30" height="29" viewBox="0 0 30 29">
          <path d="M0 2a2 2 0 012-2h8l3 4H0z" fill="#d9a20c" />
          <path d="M0 5h28a2 2 0 012 2v20a2 2 0 01-2 2H2a2 2 0 01-2-2z" fill="#fdd64e" />
          <path d="M0 20h30v7a2 2 0 01-2 2H2a2 2 0 01-2-2z" fill="#f6c11f" />
          <path d="M5 22a2 2 0 012-2h16a2 2 0 012 2v7H5z" fill="#1d74c9" />
          <rect x="9" y="22" width="12" height="2" fill="#7fc4f5" />
        </svg>
      </TaskIcon>
      <TaskIcon>
        <svg width="29" height="30" viewBox="0 0 29 30">
          <path d="M9 7V3a2 2 0 012-2h7a2 2 0 012 2v4" fill="none" stroke="#1aa7e0" strokeWidth="2" />
          <path d="M0 6h29v21a3 3 0 01-3 3H3a3 3 0 01-3-3z" fill="#123f73" />
          <rect x="9" y="11" width="5" height="5" fill="#e7512a" />
          <rect x="15" y="11" width="5" height="5" fill="#7cb82f" />
          <rect x="9" y="17" width="5" height="5" fill="#1ba1e2" />
          <rect x="15" y="17" width="5" height="5" fill="#ffb900" />
        </svg>
      </TaskIcon>
      <TaskIcon>
        <svg width="28" height="30" viewBox="0 0 28 30" fill="none">
          <circle cx="17" cy="11" r="8.500" stroke="#f07f13" strokeWidth="4" />
          <path d="M10 18L3 27" stroke="#f07f13" strokeWidth="5" strokeLinecap="round" />
        </svg>
      </TaskIcon>
      <TaskIcon>
        <svg width="30" height="30" viewBox="0 0 30 30">
          <rect width="30" height="30" fill="#7a7a7a" />
          <path d="M15 3a12 12 0 00-10 18.500L3.500 27l5.700-1.500A12 12 0 1015 3z" fill="#fff" />
          <path d="M15 5.500a9.500 9.500 0 00-8 14.600l-1 3.500 3.600-1A9.500 9.500 0 1015 5.500z" fill="#25c554" />
          <path d="M11 9.500c-.8.300-1.700 1.500-1.500 3 .3 2.800 4.500 7.300 8 7.800 1.500.2 2.800-.8 3-2 .1-.5-2.500-2-3-1.800-.5.100-1 1.300-1.500 1.300-1 0-3.800-2.500-4-3.800 0-.5 1.200-1 1.200-1.500 0-.4-1.300-3.200-2.200-3z" fill="#fff" />
        </svg>
      </TaskIcon>
      <TaskIcon running>
        <svg width="28" height="30" viewBox="0 0 28 30">
          <defs><linearGradient id="blob" x1="0" y1="0" x2="1" y2="1"><stop offset="0" stopColor="#9a8cf5" /><stop offset="1" stopColor="#1f2fe0" /></linearGradient></defs>
          <path d="M14 1c5 0 7 3 7 6 4 1 7 4 6 8 0 4-3 6-6 7-1 4-4 7-8 7-4 0-6-3-7-6-4-1-6-4-6-8s3-6 6-7c1-4 4-7 8-7z" fill="url(#blob)" />
          <PromptMark stroke="#fff" />
        </svg>
      </TaskIcon>
      <TaskIcon running>
        <svg width="22" height="30" viewBox="0 0 22 30">
          <path d="M0 2a2 2 0 012-2h18a2 2 0 012 2v24H0z" fill="#3cbcdc" />
          <path d="M0 0h22v6H0z" fill="#8fdcec" />
          <path d="M3 1.500h2M8 1.500h2M13 1.500h2M17.500 1.500h2" stroke="#233" strokeWidth="2.6" />
          <path d="M5 10h12M5 15h12M5 20h12" stroke="#14607e" strokeWidth="2" />
          <rect y="26" width="22" height="2" fill="#fbe9c8" />
          <rect y="28" width="22" height="2" fill="#7a3e1a" />
        </svg>
      </TaskIcon>
      <TaskIcon running>
        <div className="relative w-[30px] h-[34px] flex items-end">
          <svg width="30" height="30" viewBox="0 0 24 24" fill="none">
            <path d="M4 14.900A8.500 8.500 0 0119.400 7.750" stroke="#dd4b39" strokeWidth="6" />
            <path d="M19.400 7.750A8.500 8.500 0 0112 20.500" stroke="#f5c02c" strokeWidth="6" />
            <path d="M12 20.500A8.500 8.500 0 014 14.900" stroke="#2f9e4c" strokeWidth="6" />
            <circle cx="12" cy="12" r="5.500" fill="#fff" />
            <circle cx="12" cy="12" r="4.200" fill="#3a7ee8" />
          </svg>
          <svg width="20" height="20" viewBox="0 0 20 20" className="absolute right-[-6px] top-[-4px]">
            <circle cx="10" cy="10" r="9.500" fill="#a8a8a8" />
            <circle cx="10" cy="10" r="8" fill="#d8d4d0" />
            <path d="M5 18c0-5 2-6 5-6s5 1 5 6a8 8 0 01-10 0z" fill="#2e2e2e" />
            <ellipse cx="10" cy="8.500" rx="3.500" ry="4.500" fill="#a57a5e" />
          </svg>
        </div>
      </TaskIcon>
      <TaskIcon running>
        <svg width="30" height="30" viewBox="0 0 30 30">
          <path d="M21 0l9 4.500v21L21 30 8 17.500l-5 4-3-2 6-4.500-6-4.500 3-2 5 4z" fill="#0a7ccc" />
          <path d="M21 0l9 4.500v21L21 30z" fill="#2aa7ee" />
          <path d="M21 8l-8 7 8 7z" fill="#d3ebb8" />
        </svg>
      </TaskIcon>
      <TaskIcon running>
        <svg width="30" height="22" viewBox="0 0 30 22">
          <rect width="30" height="22" rx="2" fill="#2b2b2b" />
          <rect width="30" height="4" rx="2" fill="#8c8c8c" />
          <path d="M4 8l6 4-6 4" fill="none" stroke="#fff" strokeWidth="2" />
          <path d="M13 17h8" stroke="#fff" strokeWidth="2" />
        </svg>
      </TaskIcon>
      <div className="ml-[2px]">
        <TaskIcon running>
          <svg width="30" height="30" viewBox="0 0 30 30">
            <rect x="14" y="4" width="15" height="22" fill="#fff" stroke="#217346" />
            <path d="M18 4v22M23 4v22M14 9h15M14 14h15M14 19h15" stroke="#4f9a70" strokeWidth=".8" />
            <path d="M0 4l17-3v28L0 26z" fill="#1e7145" />
            <text x="3.500" y="20" fontSize="14" fontWeight="bold" fill="#fff">X</text>
          </svg>
        </TaskIcon>
      </div>
    </div>
    <div className="ml-auto flex items-center text-[#1a1a1a]">
      <ChevronUp size={20} strokeWidth={2.2} className="text-[#222]" />
      <svg width="22" height="24" viewBox="0 0 22 24" fill="none" className="ml-[20px]">
        <path d="M2 12C1 5 10 0 17 4M17 1v4h-4" stroke="#222" strokeWidth="1.3" />
        <path d="M1 18l3-2 1 3M3 18c3 3 6 4 8 3" stroke="#222" strokeWidth="1.3" />
        <circle cx="15" cy="16" r="5" fill="#f99b17" />
      </svg>
      <Wifi size={22} strokeWidth={1.5} className="ml-[17px] text-[#222]" />
      <svg width="22" height="18" viewBox="0 0 22 18" fill="none" stroke="#333" strokeWidth="1.2" className="ml-[8px]">
        <path d="M1 6h4l6-5v16l-6-5H1zM14 6.500l5 5M19 6.500l-5 5" />
      </svg>
      <svg width="26" height="20" viewBox="0 0 26 20" className="ml-[9px]">
        <rect x="1" y="4" width="22" height="14" rx="2" fill="#0d7a1c" stroke="#111" />
        <rect x="23.500" y="8" width="2" height="6" fill="#111" />
        <path d="M14 0L9 9h4l-2 8 5-9h-4z" fill="#111" stroke="#dff" strokeWidth=".4" />
      </svg>
      <div className="ml-[20px] flex flex-col items-end text-[14.5px] leading-[19px] text-[#222]">
        <span>4:47 PM</span>
        <span>5/14/2026</span>
      </div>
      <svg width="18" height="20" viewBox="0 0 18 20" fill="none" stroke="#222" className="ml-[10px] mr-[24px]">
        <path d="M2 15c2-2 1-4 2-8 1-3 3-4 5-4M2 15h11c-1-1-2-2-2-4M6 17c1 2 3 2 4 0" />
        <text x="7" y="10" fontSize="7" fill="#222" stroke="none" fontWeight="bold">z</text>
        <text x="12" y="6" fontSize="7" fill="#222" stroke="none" fontWeight="bold">z</text>
      </svg>
    </div>
  </div>
);

export default function App() {
  return (
    <div className="w-[1918px] h-[1078px] overflow-hidden flex flex-col font-['Open_Sans',sans-serif]">
      <TitleBar />
      <Ribbon />
      <FormulaBar />
      <Sheet />
      <TabBar />
      <StatusBar />
      <Taskbar />
    </div>
  );
}
